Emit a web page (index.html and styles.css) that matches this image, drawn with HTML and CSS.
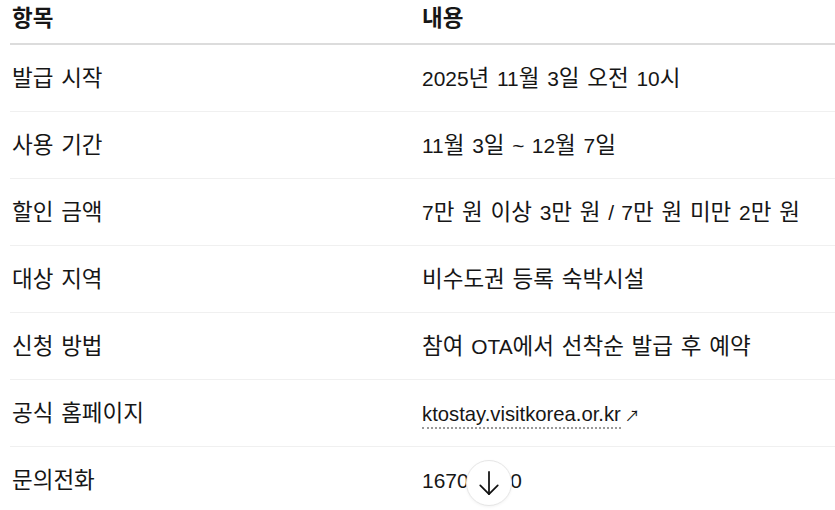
FILE: index.html
```html
<!DOCTYPE html>
<html lang="ko">
<head>
<meta charset="utf-8">
<link rel="stylesheet" href="styles.css">
</head>
<body>
<div class="wrap">
<table class="info">
  <thead>
    <tr><th class="c1">항목</th><th>내용</th></tr>
  </thead>
  <tbody>
    <tr><td class="c1">발급 시작</td><td><span class="n">2025</span>년 <span class="n">11</span>월 <span class="n">3</span>일 오전 <span class="n">10</span>시</td></tr>
    <tr><td class="c1">사용 기간</td><td><span class="n">11</span>월 <span class="n">3</span>일 <span class="n">~ 12</span>월 <span class="n">7</span>일</td></tr>
    <tr><td class="c1">할인 금액</td><td><span class="n">7</span>만 원 이상 <span class="n">3</span>만 원 <span class="n">/ 7</span>만 원 미만 <span class="n">2</span>만 원</td></tr>
    <tr><td class="c1">대상 지역</td><td>비수도권 등록 숙박시설</td></tr>
    <tr><td class="c1">신청 방법</td><td>참여 <span class="n">OTA</span>에서 선착순 발급 후 예약</td></tr>
    <tr><td class="c1">공식 홈페이지</td><td><a class="link" href="#">ktostay.visitkorea.or.kr</a><span class="ext">↗</span></td></tr>
    <tr><td class="c1">문의전화</td><td><span class="n">1670-0700</span></td></tr>
  </tbody>
</table>
</div>
<button class="scroll-btn" aria-label="아래로">
  <svg width="28" height="28" viewBox="0 0 24 24" fill="none" stroke="#111" stroke-width="1.5" stroke-linecap="round" stroke-linejoin="round"><path d="M12 2.5v19"/><path d="M4.5 14l7.5 7.5 7.5-7.5"/></svg>
</button>
</body>
</html>
```
FILE: styles.css
```css
html, body {
  margin: 0;
  padding: 0;
  background: #fff;
  overflow: hidden;
}
body {
  font-family: "Liberation Sans", "Noto Sans CJK KR", sans-serif;
  color: #161616;
  width: 835px;
  height: 510px;
}
.wrap {
  padding-left: 10px;
}
.info {
  border-collapse: collapse;
  width: 840px;
  font-size: 22.5px;
  word-spacing: 1.5px;
}
.info th, .info td {
  text-align: left;
  padding: 0 0 0 2px;
  vertical-align: middle;
}
.info th {
  font-weight: 700;
  height: 44px;
  border-bottom: 2px solid #dcdcdc;
  line-height: 1;
  padding-bottom: 4px;
  box-sizing: border-box;
}
.info td {
  height: 66px;
  border-bottom: 1px solid #f0f0f0;
  line-height: 1.2;
}
.info .c1 {
  width: 408px;
}
.n {
  font-size: 0.93em;
}
.link {
  font-size: 0.9em;
  color: #161616;
  text-decoration: none;
  border-bottom: 2px dotted #9a9a9a;
  padding-bottom: 2px;
}
.ext {
  font-size: 15px;
  margin-left: 4px;
}
.scroll-btn {
  position: absolute;
  left: 466px;
  top: 460px;
  width: 46px;
  height: 46px;
  border-radius: 50%;
  border: 1px solid #e6e6e6;
  background: #fff;
  display: flex;
  align-items: center;
  justify-content: center;
  padding: 0;
  box-shadow: 0 1px 3px rgba(0,0,0,0.05);
}
```
